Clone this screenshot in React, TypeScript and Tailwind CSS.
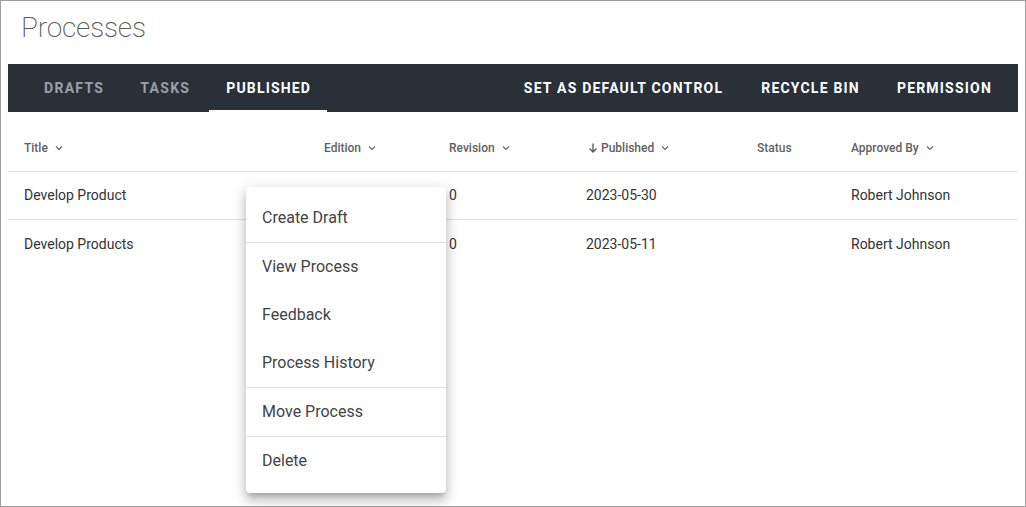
const rows = [
  { title: "Develop Product", revision: "0", published: "2023-05-30", approvedBy: "Robert Johnson" },
  { title: "Develop Products", revision: "0", published: "2023-05-11", approvedBy: "Robert Johnson" },
]

function Chevron() {
  return (
    <svg width="10" height="10" viewBox="0 0 10 10" className="ml-[6px] text-[#666]" fill="none" stroke="currentColor" strokeWidth="1.2">
      <path d="M2 3.5 L5 6.5 L8 3.5" />
    </svg>
  )
}

function ArrowDown() {
  return (
    <svg width="12" height="12" viewBox="0 0 12 12" className="mr-[2px] text-[#555]" fill="none" stroke="currentColor" strokeWidth="1.3">
      <path d="M6 1.5 V10 M2.5 6.5 L6 10 L9.5 6.5" />
    </svg>
  )
}

const menuGroups = [["Create Draft"], ["View Process", "Feedback", "Process History"], ["Move Process"], ["Delete"]]

export default function App() {
  return (
    <div className="relative h-[507px] w-[1026px] overflow-hidden border border-[#9e9e9e] bg-white px-[7px] font-['Roboto',sans-serif]">
      <h1 className="pl-[13px] pt-[9px] text-[28px] font-extralight leading-[36px] tracking-[-0.2px] text-[#5c5c5c]">Processes</h1>

      <nav className="mt-[18px] flex h-[48px] items-stretch justify-between bg-[#293037] text-[14px] font-bold">
        <div className="flex items-stretch pl-[18px] tracking-[1.3px]">
          <span className="flex items-center px-[18px] text-[#9aa0a6]">DRAFTS</span>
          <span className="flex items-center pl-[18px] pr-[19px] text-[#9aa0a6]">TASKS</span>
          <span className="flex items-center border-b-2 border-white pl-[17px] pr-[16px] pt-[2px] tracking-[1.15px] text-white">PUBLISHED</span>
        </div>
        <div className="flex items-stretch pr-[8px] tracking-[1.2px] text-white">
          <span className="flex items-center px-[19px]">SET AS DEFAULT CONTROL</span>
          <span className="flex items-center px-[19px]">RECYCLE BIN</span>
          <span className="flex items-center px-[18px]">PERMISSION</span>
        </div>
      </nav>

      <div className="mt-[12px]">
        <div className="grid h-[48px] grid-cols-[300px_125px_137px_171px_94px_1fr] items-center border-b border-[#e0e0e0] pl-4 text-[12px] font-medium text-[#5f5f5f]">
          <span className="flex items-center">Title<Chevron /></span>
          <span className="flex items-center">Edition<Chevron /></span>
          <span className="flex items-center">Revision<Chevron /></span>
          <span className="flex items-center pl-[1px]"><ArrowDown />Published<Chevron /></span>
          <span className="flex items-center">Status</span>
          <span className="flex items-center">Approved By<Chevron /></span>
        </div>
        {rows.map((r, i) => (
          <div
            key={r.title}
            className={`grid h-[48px] grid-cols-[300px_125px_137px_171px_94px_1fr] items-center pl-4 text-[14px] text-[#333] ${i === 0 ? "border-b border-[#e0e0e0]" : ""}`}
          >
            <span>{r.title}</span>
            <span></span>
            <span>{r.revision}</span>
            <span>{r.published}</span>
            <span></span>
            <span>{r.approvedBy}</span>
          </div>
        ))}
      </div>

      <div className="absolute left-[245px] top-[186px] w-[200px] rounded-[4px] bg-white pb-[8px] pt-[7px] shadow-[0_5px_5px_-3px_rgba(0,0,0,0.2),0_8px_10px_1px_rgba(0,0,0,0.14),0_3px_14px_2px_rgba(0,0,0,0.12)]">
        {menuGroups.map((group, gi) => (
          <div key={gi} className={gi > 0 ? "border-t border-[#e0e0e0]" : ""}>
            {group.map((item) => (
              <div key={item} className="flex h-[48px] items-center px-4 text-[16px] text-[#444]">
                {item}
              </div>
            ))}
          </div>
        ))}
      </div>
    </div>
  )
}
